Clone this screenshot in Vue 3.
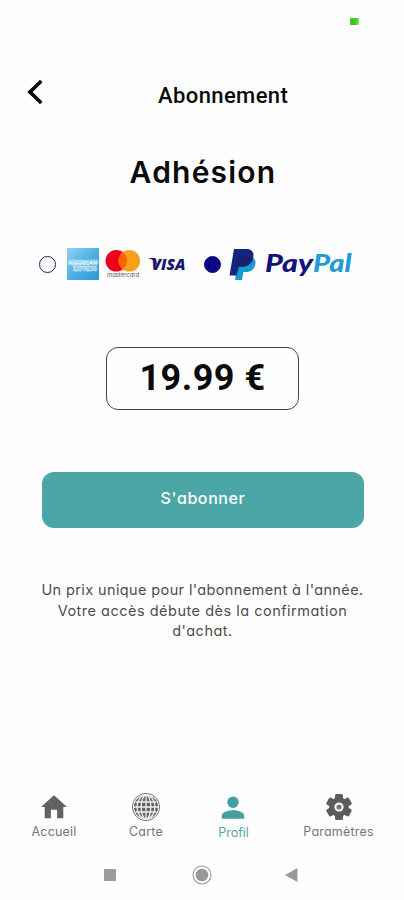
<script setup>
const tabs = [
  { id: 'home', label: 'Accueil' },
  { id: 'map', label: 'Carte' },
  { id: 'profile', label: 'Profil', active: true },
  { id: 'settings', label: 'Paramètres' },
]
</script>

<template>
  <main class="screen">
    <div class="status"><i class="camera"></i></div>
    <header class="header">
      <svg class="back" width="18" height="26" viewBox="0 0 18 26"><path d="M15.3 2 4 13l11.3 11" fill="none" stroke="#080808" stroke-width="3.7" /></svg>
      <span class="title">Abonnement</span>
    </header>
    <h1 class="heading"><span>Adhésion</span></h1>

    <div class="payments">
      <i class="radio"></i>
      <svg class="amex" width="32" height="32" viewBox="0 0 32 32">
        <defs>
          <linearGradient id="amexFill" x1="0" y1="0" x2="1" y2="1">
            <stop offset="0" stop-color="#91d3f2" /><stop offset=".5" stop-color="#4fb0e2" /><stop offset="1" stop-color="#219ada" />
          </linearGradient>
        </defs>
        <rect width="32" height="32" fill="url(#amexFill)" />
        <rect x=".5" y="11.5" width="31" height="4.5" fill="#a6d9f2" opacity=".65" />
        <g font-family="Liberation Sans, sans-serif" font-weight="700" fill="#68b5df" stroke="#e6f6fd" stroke-width=".45">
          <text x="1.5" y="16.5" font-size="5.4" textLength="28.5" lengthAdjust="spacingAndGlyphs">AMERICAN</text>
          <text x="6" y="22.5" font-size="6.5" textLength="24" lengthAdjust="spacingAndGlyphs">EXPRESS</text>
        </g>
      </svg>
      <svg class="mastercard" width="36" height="32" viewBox="0 0 36 32">
        <circle cx="11.3" cy="12.8" r="10.8" fill="#ec001b" />
        <circle cx="24.3" cy="12.8" r="10.8" fill="#f99f1b" />
        <path d="M17.8 4.2a10.800 10.800 0 0 1 0 17.200 10.800 10.800 0 0 1 0-17.200z" fill="#ff6000" />
        <text x="2" y="29" font-family="Inter, sans-serif" font-size="6.2" textLength="32" lengthAdjust="spacingAndGlyphs" fill="#555">mastercard</text>
      </svg>
      <svg class="visa" width="40" height="26" viewBox="0 -5 40 26">
        <path d="M0 2h6.2c1.2 0 1.800.6 2 1.500L9.200 10 5.200 4z" fill="#17166d" />
        <text x="3.5" y="14" font-family="Open Sans, sans-serif" font-size="16.5" font-style="italic" font-weight="800" textLength="34" lengthAdjust="spacingAndGlyphs" fill="#17166d">VISA</text>
      </svg>
      <i class="radio selected"></i>
      <svg class="pp" width="28" height="33" viewBox="0 0 28 33">
        <path d="M10 9h12c4 1 5.200 4.200 4.200 8-1.300 4.700-4.500 7-9.200 7h-2.500L13 32H6z" fill="#179bd7" />
        <path d="M5 1h12.300c5.900 0 8.200 3.500 6.800 9.200-1.400 5.900-5.300 8.300-10.800 8.300H9.600L7.700 27.500H.5z" fill="#14277c" />
        <path d="M10 9h11c1.100 0 2.200.2 3 .6-1.200 6.400-5 8.900-10.700 8.900H9.600l-1.900 9z" fill="#17216a" />
      </svg>
      <svg class="paypal" width="90" height="36" viewBox="0 -4 90 36">
        <g font-family="Lato, sans-serif" font-size="24" font-style="italic" font-weight="900">
          <text x="1" y="20" textLength="48" lengthAdjust="spacingAndGlyphs" fill="#12127e">Pay</text>
          <text x="49" y="20" textLength="38.5" lengthAdjust="spacingAndGlyphs" fill="#219bd6">Pal</text>
        </g>
      </svg>
    </div>

    <div class="price"><span>19.99 €</span></div>
    <button class="subscribe"><span>S'abonner</span></button>
    <p class="note">
      <span>Un prix unique pour l'abonnement à l'année.</span>
      <span class="wide">Votre accès débute dès la confirmation</span>
      <span class="wide">d'achat.</span>
    </p>

    <nav class="tabs">
      <a v-for="tab in tabs" :key="tab.id" class="tab" :class="[tab.id, { active: tab.active }]">
        <svg width="30" height="30" viewBox="0 0 30 30">
          <path v-if="tab.id === 'home'" d="M15 2.200 28 14h-3.700v11.300h-6.200v-8.500h-6.200v8.500H5.700V14H2z" fill="#626262" />
          <g v-else-if="tab.id === 'map'">
            <circle cx="15" cy="14" r="13.600" fill="none" stroke="#757575" stroke-width="1" />
            <circle cx="15" cy="14" r="12" fill="#626262" />
            <g fill="none" stroke="#efefef" stroke-width="1.300">
              <path d="M3 14h24M4.500 9h21M4.500 19h21M15 2v24" />
              <ellipse cx="15" cy="14" rx="4.800" ry="12" />
              <ellipse cx="15" cy="14" rx="9" ry="12" />
            </g>
          </g>
          <g v-else-if="tab.id === 'profile'" fill="#43a0a0">
            <circle cx="14" cy="9.300" r="5.700" /><path d="M2.800 25.800v-3c0-4 7.400-5.500 11.200-5.500s11.200 1.500 11.200 5.500v3z" />
          </g>
          <g v-else fill="#5c5c5c" transform="translate(0 -1)">
            <rect v-for="n in 6" :key="n" x="11" y="2" width="8" height="8" rx="1.500" :transform="`rotate(${n * 60} 15 15)`" />
            <circle cx="15" cy="15" r="9.800" />
            <circle cx="15" cy="15" r="4.600" fill="#fff" />
            <circle cx="15" cy="15" r="2.600" fill="#777" />
          </g>
        </svg>
        <span>{{ tab.label }}</span>
      </a>
    </nav>

    <div class="system">
      <svg width="12" height="12" viewBox="0 0 12 12"><rect width="12" height="12" fill="#9c9c9c" /></svg>
      <svg width="20" height="20" viewBox="0 0 20 20"><circle cx="10" cy="10" r="9" fill="none" stroke="#999" stroke-width="1.100" /><circle cx="10" cy="10" r="6.300" fill="#999" /></svg>
      <svg width="13" height="14" viewBox="0 0 13 14"><path d="M0 7 12.500 0v14z" fill="#999" /></svg>
    </div>
  </main>
</template>

<style>
body { background: #fefefe; }
</style>

<style scoped>
.screen {
  box-sizing: border-box;
  width: 404px;
  height: 900px;
  display: flex;
  flex-direction: column;
  overflow: hidden;
  background: #fefefe;
  color: #0b0b0b;
  font-family: Inter, "Liberation Sans", sans-serif;
  font-feature-settings: "cv11" 1;
}
span { white-space: nowrap; }
.status { height: 70px; flex: none; display: flex; justify-content: flex-end; padding: 18px 45px 0 0; box-sizing: border-box; }
.camera { width: 9px; height: 7px; border-radius: 1px; background: linear-gradient(90deg, #42c926 60%, #8bdc79); }
.header { height: 50px; flex: none; display: flex; align-items: center; padding-left: 26px; }
.back { margin-top: -6px; }
.title { margin: 1px 0 0 114px; font: 500 22px/28px Roboto, sans-serif; letter-spacing: 0.4px; }
.heading { height: 106px; flex: none; margin: 0; padding-left: 2px; text-align: center; font-weight: 600; font-size: 30px; line-height: 105px; letter-spacing: 1.2px; }
.payments { height: 36px; flex: none; margin-top: 20px; display: flex; align-items: center; padding-left: 39px; }
.radio { width: 17px; height: 17px; box-sizing: border-box; border: 1.5px solid #201c64; border-radius: 50%; flex: none; }
.radio.selected { background: #0c0885; border-color: #0c0885; margin-left: 16px; }
.visa, .pp, .paypal, .amex, .mastercard { flex: none; }
.amex { margin-left: 11px; }
.mastercard { margin-left: 6px; }
.visa { margin-left: 7px; }
.pp { margin-left: 8px; }
.paypal { margin-left: 7px; margin-top: 4px; }
.price { width: 193px; height: 63px; flex: none; box-sizing: border-box; margin: 65px 0 0 106px; border: 1.3px solid #444; border-radius: 12px; display: flex; justify-content: center; font: 700 36px/60px Roboto, sans-serif; letter-spacing: 0.5px; }
.subscribe { width: 322px; height: 56px; flex: none; margin: 62px 0 0 42px; border: 0; border-radius: 12px; background: #4ca6a6; color: #fff; padding: 0 0 4px; font: 500 16px/24px Inter, sans-serif; font-feature-settings: inherit; letter-spacing: 0.6px; }
.note { height: 63px; flex: none; margin: 52px 0 0; padding-left: 1px; display: flex; flex-direction: column; align-items: center; font-size: 14.5px; line-height: 20.7px; letter-spacing: 0.38px; color: #4d4d4d; }
.note .wide { letter-spacing: 0.5px; }
.tabs { height: 50px; flex: none; margin-top: 150px; display: grid; grid-template-columns: 108px 76px 99px 111px; }
.tab { display: flex; flex-direction: column; align-items: center; font-size: 12.5px; line-height: 18px; letter-spacing: 0.2px; color: #777; }
.tab.active { color: #54a9a9; letter-spacing: 0; }
.tab.active span { padding-top: 1px; }
.system { height: 20px; flex: none; margin-top: 22px; display: flex; align-items: center; padding-left: 104px; }
.system svg:nth-child(2) { margin-left: 76px; }
.system svg:nth-child(3) { margin-left: 73px; }
</style>
